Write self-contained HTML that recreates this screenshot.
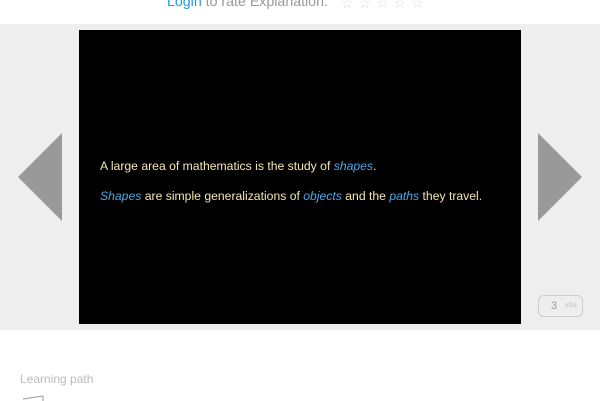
<!DOCTYPE html>
<html><head><style>
body{margin:0;width:600px;height:400px;overflow:hidden;background:#fff;font-family:"Liberation Sans",sans-serif;position:relative}
.top{position:absolute;top:-6px;left:167px;font-size:14.2px;color:#999;white-space:nowrap}
.top a{color:#1f9ae6;text-decoration:none}
.stars{position:absolute;top:-5px;left:341px;font-size:14px;color:#ddd;letter-spacing:5px}
.band{position:absolute;top:24px;left:0;width:600px;height:306px;background:#eee}
.slide{position:absolute;top:30px;left:79px;width:442px;height:294px;background:#000;color:#f5e6b0;font-size:12.2px}
.slide p{position:absolute;left:21px;margin:0;white-space:nowrap}
.slide i{color:#4aa8e8}
.cnt{position:absolute;left:538px;top:295px;width:45px;height:22px;border:1px solid #ccc;border-radius:6px;box-sizing:border-box;font-size:11px;color:#999;background:#eee}
.lp{position:absolute;left:20px;top:372px;font-size:12px;color:#bbb}
</style></head><body>
<div class="top"><a>Login</a> to rate Explanation.</div>
<div class="stars">☆☆☆☆☆</div>
<div class="band"></div>
<svg style="position:absolute;left:18px;top:133px" width="44" height="88"><polygon points="44,0 44,88 0,44" fill="#999"/></svg>
<svg style="position:absolute;left:538px;top:133px" width="44" height="88"><polygon points="0,0 0,88 44,44" fill="#999"/></svg>
<div class="slide">
<p style="top:129px">A large area of mathematics is the study of <i>shapes</i>.</p>
<p style="top:159px"><i>Shapes</i> are simple generalizations of <i>objects</i> and the <i>paths</i> they travel.</p>
</div>
<div class="cnt"><span style="position:absolute;left:12px;top:4px">3</span><span style="position:absolute;left:26px;top:7px;font-size:6px;color:#bbb">of16</span></div>
<div class="lp">Learning path</div>
<svg style="position:absolute;left:22px;top:395px" width="24" height="6"><path d="M1,4 L21,1" stroke="#999" fill="none"/><path d="M21,1 L21,6" stroke="#999"/></svg>
</body></html>
